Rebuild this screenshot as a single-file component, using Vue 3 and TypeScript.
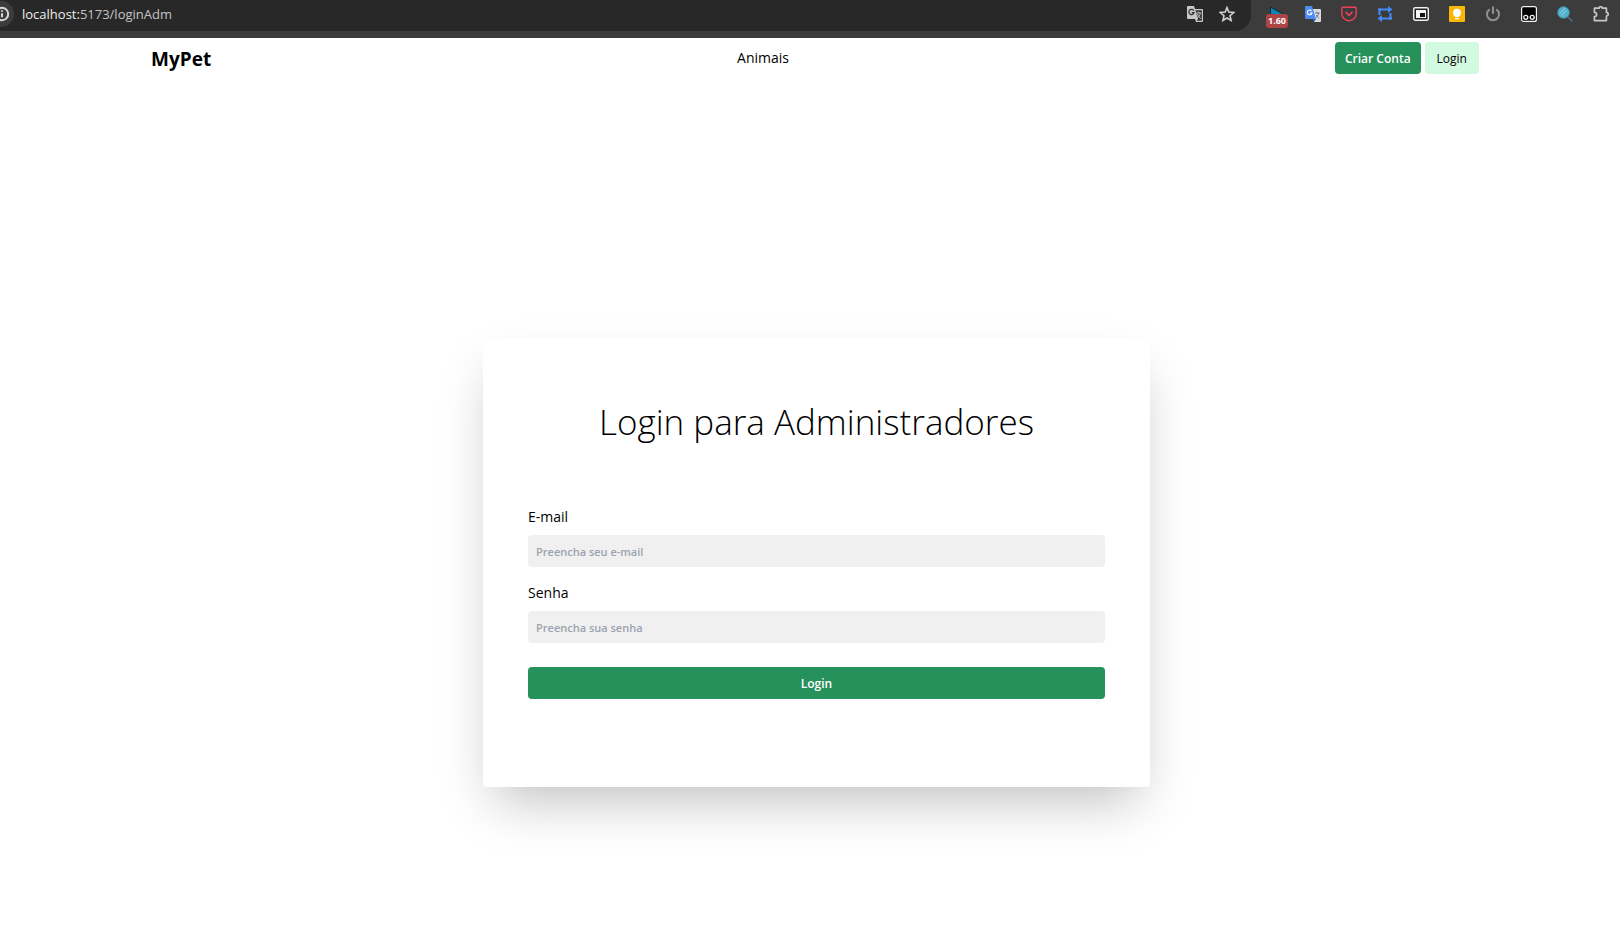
<script setup lang="ts">
import { ref } from 'vue'

const email = ref('')
const senha = ref('')
</script>

<template>
  <div class="window">
    <div class="toolbar">
      <div class="omnibox">
        <button class="info" type="button" aria-label="Informações do site">
          <svg width="16" height="16" viewBox="0 0 16 16" fill="none" stroke="#d6d6d6" stroke-width="2">
            <circle cx="8" cy="8" r="6.2" />
            <path d="M8 7.2v4M8 4.3v1.5" />
          </svg>
        </button>
        <div class="url"><span class="host">localhost:</span>5173/loginAdm</div>
        <div class="actions">
          <button type="button" aria-label="Traduzir">
            <svg width="16" height="16" viewBox="0 0 16 16">
              <path d="M1 0h6l1 3h7a1 1 0 0 1 1 1v11a1 1 0 0 1-1 1H9l-1-3H1a1 1 0 0 1-1-1V1a1 1 0 0 1 1-1z" fill="#c7c7c7" />
              <path d="M8.4 4.2H14.8V14.8H9.6L11 13z" fill="#333" />
              <path d="M6.8 4.7A2.6 2.6 0 1 0 7 6.7H4.7" fill="none" stroke="#333" stroke-width="1.2" />
              <path d="M9.2 7h5M11.7 5.6V7M13.3 7c-.4 2.2-1.6 4-3.2 5M10.3 8.2c.7 1.8 1.9 3.2 3.5 4.3" fill="none" stroke="#c7c7c7" stroke-width="1" />
            </svg>
          </button>
          <button type="button" aria-label="Favoritar">
            <svg width="16" height="16" viewBox="0 0 16 16" fill="none" stroke="#cfcfcf" stroke-width="1.6">
              <path d="M8 1.6l1.8 4.5 4.9.4-3.7 3.2 1.1 4.8L8 12l-4.1 2.5L5 9.7 1.3 6.5l4.9-.4z" />
            </svg>
          </button>
        </div>
      </div>
      <div class="extensions">
        <button class="speed" type="button" aria-label="Velocidade 1.60">
          <svg width="16" height="16" viewBox="0 0 16 16">
            <path d="M1.5 1v7.5H15z" fill="#0d83b5" stroke="#102b38" stroke-width="1" />
          </svg>
          <span class="badge">1.60</span>
        </button>
        <button type="button" aria-label="Google Tradutor">
          <svg width="16" height="16" viewBox="0 0 16 16">
            <path d="M7 3h8a1 1 0 0 1 1 1v11a1 1 0 0 1-1 1H9z" fill="#d9dcdf" />
            <path d="M1 0h6l4 13H1a1 1 0 0 1-1-1V1a1 1 0 0 1 1-1z" fill="#4c8bf5" />
            <path d="M8 13h3l-2 3z" fill="#3058b5" />
            <path d="M6.6 5A2.4 2.4 0 1 0 7 7H4.7" fill="none" stroke="#fff" stroke-width="1.1" />
            <path d="M10 7h4.8M12 5.7V7M13.6 7c-.3 2-1.3 3.6-2.6 4.7M11.3 9c.6 1.3 1.6 2.5 2.9 3.4" fill="none" stroke="#68737d" stroke-width="1" />
          </svg>
        </button>
        <button type="button" aria-label="Pocket">
          <svg width="16" height="16" viewBox="0 0 16 16" fill="none" stroke="#ee4056" stroke-linecap="round" stroke-linejoin="round">
            <path d="M2 1.3h12a1.2 1.2 0 0 1 1.2 1.2v5a7.2 7.2 0 0 1-14.4 0v-5A1.2 1.2 0 0 1 2 1.3z" stroke-width="1.4" />
            <path d="M5 6.3l3 3 3-3" stroke-width="1.7" />
          </svg>
        </button>
        <button type="button" aria-label="Alternar">
          <svg width="16" height="16" viewBox="0 0 16 16" fill="none" stroke="#438bf7" stroke-width="2">
            <path d="M2.5 9V3.5H12M13.5 7v5.5H4" />
            <path d="M11 0l4.5 3.5L11 7zM5 9L.5 12.5 5 16z" fill="#438bf7" stroke="none" />
            <path d="M1 3.5h3M12 12.5h3" />
          </svg>
        </button>
        <button type="button" aria-label="Picture-in-picture">
          <svg width="16" height="16" viewBox="0 0 16 16">
            <rect x=".7" y="1.7" width="14.6" height="12.6" rx="1.5" fill="#222" stroke="#f0f0f0" stroke-width="1.4" />
            <path d="M3 4h10v8H3z" fill="#f4f4f4" />
            <path d="M7 7h5v4H7z" fill="#111" />
          </svg>
        </button>
        <button type="button" aria-label="Google Keep">
          <svg width="16" height="16" viewBox="0 0 16 16">
            <rect width="16" height="16" rx="1" fill="#fbb605" />
            <circle cx="8" cy="6.8" r="4" fill="#fff" />
            <path d="M6 9h4v2H6zM6 12h4v1.3H6z" fill="#fff" />
          </svg>
        </button>
        <button type="button" aria-label="Desligar">
          <svg width="16" height="16" viewBox="0 0 16 16" fill="none" stroke="#929292" stroke-width="2">
            <path d="M4.7 3.3a6 6 0 1 0 6.6 0M8 .5v7.3" />
          </svg>
        </button>
        <button type="button" aria-label="Tampermonkey">
          <svg width="16" height="16" viewBox="0 0 16 16">
            <rect x=".6" y=".6" width="14.8" height="14.8" rx="2" fill="#000" stroke="#f2f2f2" stroke-width="1.2" />
            <g fill="#000" stroke="#f2f2f2" stroke-width="1.3">
              <circle cx="4.8" cy="11.3" r="2" />
              <circle cx="11.2" cy="11.3" r="2" />
            </g>
          </svg>
        </button>
        <button type="button" aria-label="Pesquisar">
          <svg width="16" height="16" viewBox="0 0 16 16">
            <path d="M10.5 10.5L15.5 15.5" stroke="#53687a" stroke-width="1.6" />
            <circle cx="6.5" cy="6.5" r="5.8" fill="#55b2cd" stroke="#458ca2" stroke-width="1" />
            <path d="M3 7.5l5-5M4.5 9.5l5-5" stroke="#8fd3e6" stroke-width="1" />
          </svg>
        </button>
        <button type="button" aria-label="Extensões">
          <svg width="16" height="16" viewBox="0 0 16 16" fill="none" stroke="#c6c6c6" stroke-width="1.7" stroke-linejoin="round">
            <path d="M1.5 2.2h4.7a1.6 1.6 0 0 1 3.2 0h4v4.2a1.6 1.6 0 0 1 0 3.6v4.6h-12v-3.9a2.2 2.2 0 0 0 0-4.4z" />
          </svg>
        </button>
      </div>
    </div>

    <header class="header">
      <a class="brand" href="#">MyPet</a>
      <nav class="nav"><a href="#">Animais</a></nav>
      <div class="account">
        <button class="btn primary" type="button">Criar Conta</button>
        <button class="btn light" type="button">Login</button>
      </div>
    </header>

    <main class="main">
      <form class="card" @submit.prevent>
        <h1>Login para Administradores</h1>
        <label for="email">E-mail</label>
        <input id="email" v-model="email" type="email" placeholder="Preencha seu e-mail" />
        <label for="senha">Senha</label>
        <input id="senha" v-model="senha" type="password" placeholder="Preencha sua senha" />
        <button class="btn primary submit" type="submit">Login</button>
      </form>
    </main>
  </div>
</template>

<style>
body {
  margin: 0;
  background: #fff;
}
</style>

<style scoped>
.window {
  min-height: 100vh;
  overflow: hidden;
  color: #000;
  font-family: "Segoe UI", "Open Sans", "Noto Sans", sans-serif;
  font-size: 14px;
  line-height: 20px;
}

*,
*::before {
  box-sizing: border-box;
}

button,
input {
  border: 0;
  margin: 0;
  font: inherit;
}

a {
  color: inherit;
  text-decoration: none;
}

.toolbar {
  display: flex;
  height: 38px;
  background: #3c3c3c;
}

.omnibox {
  flex: 1;
  display: flex;
  align-items: center;
  height: 31px;
  padding: 0 16px 3px 0;
  border-radius: 0 0 16px 0;
  background: #282828;
}

.toolbar button {
  display: flex;
  padding: 0;
  background: none;
}

.toolbar .info {
  width: 14px;
  height: 26px;
  margin-right: 8px;
  align-items: center;
  justify-content: flex-end;
  border-radius: 0 13px 13px 0;
  background: #3c3c3c;
}

.info svg {
  flex: none;
  margin-right: 4px;
}

.url {
  flex: 1;
  color: #c4c4c4;
  font-size: 13px;
}

.host {
  color: #ececec;
}

.actions {
  display: flex;
  gap: 16px;
}

.extensions {
  display: flex;
  align-items: center;
  gap: 20px;
  height: 28px;
  padding: 0 11px 0 18px;
}

.speed {
  position: relative;
}

.badge {
  position: absolute;
  top: 8px;
  left: -3px;
  width: 22px;
  height: 14px;
  border-radius: 3px;
  background: #ad4545;
  color: #fff;
  font-size: 9px;
  font-weight: 700;
  line-height: 14px;
  text-align: center;
}

.header {
  display: flex;
  align-items: center;
  justify-content: space-between;
  height: 40px;
  padding: 0 141px 0 151px;
}

.brand {
  padding-top: 2px;
  font-size: 19px;
  font-weight: 700;
  line-height: 28px;
}

.nav {
  padding-right: 20px;
  font-weight: 500;
}

.account {
  display: flex;
  gap: 4px;
}

.btn {
  height: 32px;
  padding: 0 12px;
  border-radius: 4px;
  font-size: 12px;
  cursor: pointer;
}

.primary {
  padding: 1px 10px 0;
  background: #27915b;
  color: #fff;
  font-weight: 600;
}

.light {
  padding-top: 1px;
  background: #d1fae0;
  color: #000;
  font-weight: 500;
}

.main {
  display: flex;
  justify-content: center;
  padding: 260px 0 120px 13px;
}

.card {
  display: flex;
  flex-direction: column;
  width: 41.5%;
  min-width: 480px;
  padding: 64px 45px 88px;
  border-radius: 4px;
  background: #fff;
  box-shadow: 0 25px 50px -12px rgba(0, 0, 0, 0.25);
}

h1 {
  margin: 0 0 65px;
  font-size: 35px;
  font-weight: 300;
  line-height: 40px;
  text-align: center;
}

label {
  margin-bottom: 8px;
  font-weight: 500;
}

input {
  width: 100%;
  height: 32px;
  margin-bottom: 16px;
  padding: 0 8px;
  border-radius: 4px;
  background: #f0f0f0;
  color: #000;
  font-size: 11px;
  font-weight: 600;
}

input::placeholder {
  color: #9ca3af;
  opacity: 1;
}

.submit {
  margin-top: 8px;
}
</style>
